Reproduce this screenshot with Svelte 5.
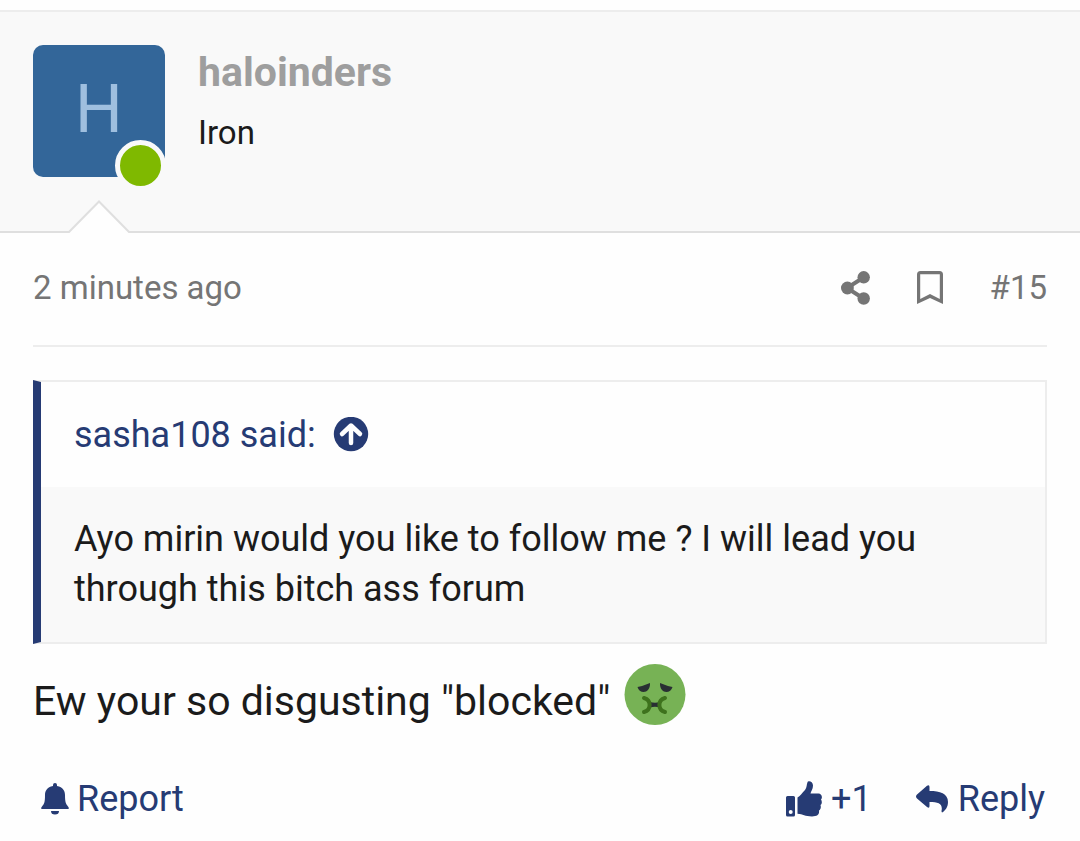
<script>
  const post = {
    author: "haloinders",
    title: "Iron",
    time: "2 minutes ago",
    number: 15,
  };
  const quote = {
    author: "sasha108",
    text: "Ayo mirin would you like to follow me ? I will lead you through this bitch ass forum",
  };
</script>

<article class="post">
  <header class="user">
    <a class="avatar" href="#member" aria-label={post.author}>
      {post.author[0].toUpperCase()}
      <span class="online"></span>
    </a>
    <div class="user-text">
      <a class="name" href="#member">{post.author}</a>
      <div class="title">{post.title}</div>
    </div>
    <svg class="arrow" viewBox="0 0 64 33" aria-hidden="true">
      <path d="M1 33 L2 31 L32 1 L62 31 L63 33 Z" fill="#fefefe" />
      <path d="M0 32 H2 L32 1.5 L62 32 H64" fill="none" stroke="#dfdfdf" stroke-width="2" />
    </svg>
  </header>

  <div class="main">
    <div class="meta">
      <a class="time" href="#post"><time>{post.time}</time></a>
      <button class="share" aria-label="Share">
        <svg width="30" height="34" viewBox="0 0 30 34">
          <path d="M23.5 6.5 L7 17 L23.5 27.5" fill="none" stroke="currentColor" stroke-width="4" />
          <circle cx="23.7" cy="6.3" r="6.2" />
          <circle cx="7.4" cy="17" r="6.4" />
          <circle cx="23.7" cy="27.5" r="6.2" />
        </svg>
      </button>
      <button class="bookmark" aria-label="Add bookmark">
        <svg width="26" height="34" viewBox="0 0 26 34">
          <path
            fill-rule="evenodd"
            d="M3.5 0 H22.5 Q26 0 26 3.5 V33 L13 27 L0 33 V3.5 Q0 0 3.5 0 Z M3.2 3.2 V28 L13 23 L22.8 28 V3.2 Z"
          />
        </svg>
      </button>
      <a class="number" href="#post">#{post.number}</a>
    </div>

    <blockquote>
      <a class="quote-head" href="#quoted">
        {quote.author} said:
        <svg width="36" height="36" viewBox="0 0 36 36" aria-hidden="true">
          <circle cx="18" cy="17" r="17.2" />
          <path
            d="M18 26 V9 M9 17 L18 8.5 L27 17"
            fill="none"
            stroke="#fefefe"
            stroke-width="4.5"
            stroke-linecap="round"
            stroke-linejoin="round"
          />
        </svg>
      </a>
      <p class="quote-text">{quote.text}</p>
    </blockquote>

    <p class="message">
      <span>Ew your so disgusting "blocked"</span>
      <svg width="62" height="62" viewBox="0 0 62 62" role="img" aria-label="Sick face">
        <circle cx="31" cy="30.5" r="30.5" fill="#77b255" />
        <path d="M13.5 23 Q19 22 26 19 C26.5 30.500 15 30 13.5 23 Z" fill="#292f33" />
        <path d="M48.5 23 Q43 22 36 19 C35.5 30.500 47 30 48.500 23 Z" fill="#292f33" />
        <path d="M26 38 Q31 39.5 36 38 V43.5 Q31 42 26 43.5 Z" fill="#292f33" />
        <path
          d="M20 34 C27.500 36 27.500 46 20 48 M41 34 C33.500 36 33.500 46 41 48"
          fill="none"
          stroke="#3e721d"
          stroke-width="4"
          stroke-linecap="round"
        />
      </svg>
    </p>

    <footer>
      <button class="report">
        <svg width="28" height="32" viewBox="0 0 28 32" aria-hidden="true">
          <path
            d="M12 3 V2 Q12 0 14 0 T16 2 V3 C22 4 24 8 24 12 C24 20 25 21 27 23.5 C29 26 27 26 26 26 H2 C1 26 -1 26 1 23.5 C3 21 4 20 4 12 C4 8 6 4 12 3 Z M10 28 H18 Q18 31.5 14 31.5 T10 28 Z"
          />
        </svg>
        Report
      </button>
      <button class="like">
        <svg width="36" height="36" viewBox="0 0 36 36" aria-hidden="true">
          <path
            fill-rule="evenodd"
            d="M1.5 15 H7.5 Q9 15 9 16.5 V34 Q9 35.5 7.5 35.5 H1.5 Q0 35.5 0 34 V16.5 Q0 15 1.5 15 Z M4.7 29 A2 2 0 1 0 4.7 33 A2 2 0 1 0 4.7 29 Z"
          />
          <path
            d="M11.5 16.5 C14 15.5 16 12 19 9 C21 6.5 20.5 3.5 21.5 1.2 C22 -0.8 27 0 27 4.5 C27 8 25 10 24.500 12.500 H32.500 C35.500 12.500 37 16.500 35 18.500 C36.300 20.500 36 23 34.500 24 C35.300 26.500 34.500 28.500 33 29.500 C33.500 33.500 31.500 35.500 26 35.500 C19 35.500 17 33 11.500 32.800 Z"
          />
        </svg>
        +1
      </button>
      <button class="reply">
        <svg width="32" height="28" viewBox="0 0 32 28" aria-hidden="true">
          <path
            d="M1 9.5 L11 0.8 Q13.5 -1 13.5 2 V6 C24 6 32 8.500 32 17 C32 22 29.500 25 27 27 Q25.500 28.300 25.500 26 C27 19 23 17 13.500 17 V21 Q13.500 24 11 22 L1 13.500 Q-1 11.500 1 9.5 Z"
          />
        </svg>
        Reply
      </button>
    </footer>
  </div>
</article>

<style>
  :global(body) {
    margin: 0;
    background: #fefefe;
  }
  .post {
    padding-top: 10px;
    font-family: Roboto, sans-serif;
    color: #1b1b1b;
  }
  a {
    color: inherit;
    text-decoration: none;
  }
  button {
    display: flex;
    align-items: center;
    padding: 0;
    border: 0;
    background: none;
    font: inherit;
    color: inherit;
  }
  svg {
    display: block;
    fill: currentColor;
    flex: none;
  }
  p {
    margin: 0;
  }

  .user {
    position: relative;
    display: flex;
    gap: 33px;
    padding: 33px 33px 54px;
    background: #f9f9f9;
    border-top: 2px solid #ededed;
    border-bottom: 2px solid #dfdfdf;
  }
  .avatar {
    position: relative;
    width: 132px;
    height: 132px;
    border-radius: 10px;
    background: #336699;
    color: #9fbfdf;
    font-size: 67px;
    line-height: 128px;
    text-align: center;
  }
  /* presence dot, over the avatar's corner */
  .online {
    position: absolute;
    right: -1px;
    bottom: -14px;
    width: 41px;
    height: 41px;
    border: 5px solid #f9f9f9;
    border-radius: 50%;
    background: #7fb900;
  }
  .name {
    display: block;
    font-size: 41px;
    line-height: 54px;
    font-weight: 700;
    color: #9e9e9e;
  }
  .title {
    font-size: 33px;
    line-height: 46px;
    margin-top: 11px;
  }
  /* notch that points at the avatar, laid over the header border */
  .arrow {
    position: absolute;
    left: 67px;
    bottom: -2px;
    width: 64px;
    height: 33px;
  }

  .main {
    padding: 0 33px 16px;
  }
  .meta {
    display: flex;
    align-items: center;
    height: 110px;
    padding-bottom: 2px;
    border-bottom: 2px solid #ededed;
    margin-bottom: 33px;
    font-size: 33px;
    line-height: 46px;
    color: #757575;
  }
  .time {
    flex: 1;
  }
  .bookmark {
    margin: 0 47px;
  }

  blockquote {
    margin: 0;
    border: 2px solid #ededed;
    border-left: 8px solid #263b74;
    background: #f9f9f9;
    font-size: 36px;
    line-height: 50px;
  }
  .quote-head {
    display: flex;
    align-items: center;
    gap: 17px;
    height: 105px;
    padding: 0 33px;
    background: #fefefe;
    color: #263b74;
  }
  .quote-text {
    padding: 27px 33px 28px;
  }

  .message {
    display: flex;
    align-items: flex-start;
    gap: 14px;
    margin-top: 20px;
    font-size: 41px;
    line-height: 62px;
  }
  .message span {
    padding-top: 6px;
  }

  footer {
    display: flex;
    align-items: center;
    height: 50px;
    margin-top: 42px;
    padding: 0 2px 0 8px;
    font-size: 36px;
    line-height: 50px;
    color: #263b74;
  }
  .report {
    gap: 8px;
    margin-right: auto;
  }
  .like {
    gap: 9px;
    margin-right: 44px;
  }
  .reply {
    gap: 10px;
  }
</style>
